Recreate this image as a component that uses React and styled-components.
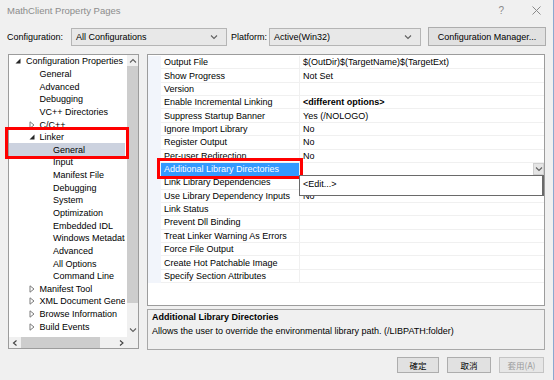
import React from 'react'
import styled, { createGlobalStyle } from 'styled-components'

const GlobalStyle = createGlobalStyle`
  body {
    margin: 0;
    background: #f0f0f0;
    font-family: "Liberation Sans", Arial, "Noto Sans CJK TC", sans-serif;
    font-size: 9px;
    color: #000;
  }
`

const treeItems = [
  { text: 'Configuration Properties', level: 0, toggle: 'open' },
  { text: 'General', level: 1 },
  { text: 'Advanced', level: 1 },
  { text: 'Debugging', level: 1 },
  { text: 'VC++ Directories', level: 1 },
  { text: 'C/C++', level: 1, toggle: 'closed' },
  { text: 'Linker', level: 1, toggle: 'open', marked: true },
  { text: 'General', level: 2, selected: true, marked: true },
  { text: 'Input', level: 2 },
  { text: 'Manifest File', level: 2 },
  { text: 'Debugging', level: 2 },
  { text: 'System', level: 2 },
  { text: 'Optimization', level: 2 },
  { text: 'Embedded IDL', level: 2 },
  { text: 'Windows Metadata', level: 2 },
  { text: 'Advanced', level: 2 },
  { text: 'All Options', level: 2 },
  { text: 'Command Line', level: 2 },
  { text: 'Manifest Tool', level: 1, toggle: 'closed' },
  { text: 'XML Document Generator', level: 1, toggle: 'closed' },
  { text: 'Browse Information', level: 1, toggle: 'closed' },
  { text: 'Build Events', level: 1, toggle: 'closed' },
]

// value of "Link Library Dependencies" sits under the open drop-down, so left blank
const properties = [
  ['Output File', '$(OutDir)$(TargetName)$(TargetExt)'],
  ['Show Progress', 'Not Set'],
  ['Version', ''],
  ['Enable Incremental Linking', '<different options>', true],
  ['Suppress Startup Banner', 'Yes (/NOLOGO)'],
  ['Ignore Import Library', 'No'],
  ['Register Output', 'No'],
  ['Per-user Redirection', 'No'],
  ['Additional Library Directories', '', false, true],
  ['Link Library Dependencies', ''],
  ['Use Library Dependency Inputs', 'No'],
  ['Link Status', ''],
  ['Prevent Dll Binding', ''],
  ['Treat Linker Warning As Errors', ''],
  ['Force File Output', ''],
  ['Create Hot Patchable Image', ''],
  ['Specify Section Attributes', ''],
]

const Chevron = ({ dir = 'down', color = '#606060' }) => {
  const paths = {
    down: 'M1 1.5 L4 4.5 L7 1.5',
    up: 'M1 4.5 L4 1.5 L7 4.5',
    left: 'M4.5 0.5 L1.5 3 L4.5 5.5',
    right: 'M2 0.5 L5 3 L2 5.5',
  }
  const horiz = dir === 'left' || dir === 'right'
  return (
    <svg width={horiz ? 7 : 8} height={6} viewBox={horiz ? '0 0 7 6' : '0 0 8 6'}>
      <path d={paths[dir]} fill="none" stroke={color} strokeWidth="1.1" />
    </svg>
  )
}

const Triangle = ({ open }) =>
  open ? (
    <svg width="6" height="6" viewBox="0 0 6 6">
      <path d="M5.5 0.5 L5.5 5.5 L0.5 5.5 Z" fill="#262626" />
    </svg>
  ) : (
    <svg width="6" height="8" viewBox="0 0 6 8">
      <path d="M1 0.8 L5 4 L1 7.2 Z" fill="none" stroke="#7a7a7a" strokeWidth="1" />
    </svg>
  )

export default function App() {
  const marked = treeItems.filter((i) => i.marked)
  const firstMarked = treeItems.findIndex((i) => i.marked)
  return (
    <>
      <GlobalStyle />
      <Window>
        <TitleBar>
          <Title>MathClient Property Pages</Title>
          <Caption>
            <span>?</span>
            <svg width="9" height="9" viewBox="0 0 9 9">
              <path d="M0.5 0.5 L8.5 8.5 M8.5 0.5 L0.5 8.5" stroke="#8a8a8a" strokeWidth="1" />
            </svg>
          </Caption>
        </TitleBar>

        <ConfigBar>
          <Label>Configuration:</Label>
          <Select>
            All Configurations
            <Chevron />
          </Select>
          <Label $indent>Platform:</Label>
          <Select>
            Active(Win32)
            <Chevron />
          </Select>
          <span />
          <Button $h={19}>Configuration Manager...</Button>
        </ConfigBar>

        <Body>
          <Tree>
            <List>
              {treeItems.slice(0, firstMarked).map((item, i) => (
                <TreeRow key={i} item={item} />
              ))}
              <Marked>
                {marked.map((item, i) => (
                  <TreeRow key={i} item={item} />
                ))}
              </Marked>
              {treeItems.slice(firstMarked + marked.length).map((item, i) => (
                <TreeRow key={i} item={item} />
              ))}
            </List>
            <VScroll>
              <ArrowCell $h={11}>
                <Chevron dir="up" />
              </ArrowCell>
              <VThumb />
              <Spacer />
              <ArrowCell $h={14}>
                <Chevron dir="down" />
              </ArrowCell>
            </VScroll>
            <HScroll>
              <ArrowCell $w={12}>
                <Chevron dir="left" color="#404040" />
              </ArrowCell>
              <HThumb />
              <Spacer />
              <ArrowCell $w={12}>
                <Chevron dir="right" color="#404040" />
              </ArrowCell>
            </HScroll>
            <Corner />
          </Tree>

          <RightColumn>
            <Grid>
              {properties.map(([name, value, bold, selected], i) => (
                <PropRow key={i}>
                  <Gutter />
                  <NameCell $selected={selected}>{name}</NameCell>
                  <ValueCell $bold={bold}>
                    {value}
                    {selected && (
                      <>
                        <DropButton>
                          <Chevron />
                        </DropButton>
                        <Popup>&lt;Edit...&gt;</Popup>
                      </>
                    )}
                  </ValueCell>
                </PropRow>
              ))}
            </Grid>
            <Description>
              <DescTitle>Additional Library Directories</DescTitle>
              <div>Allows the user to override the environmental library path. (/LIBPATH:folder)</div>
            </Description>
          </RightColumn>
        </Body>

        <Footer>
          <Button $w={42} $h={16} $cjk>確定</Button>
          <Button $w={44} $h={16} $cjk>取消</Button>
          <Button $w={45} $h={16} $cjk disabled>套用(A)</Button>
        </Footer>
      </Window>
    </>
  )
}

function TreeRow({ item }) {
  return (
    <Row $level={item.level} $selected={item.selected}>
      <Toggle>{item.toggle && <Triangle open={item.toggle === 'open'} />}</Toggle>
      <RowText>{item.text}</RowText>
    </Row>
  )
}

const Window = styled.div`
  width: 554px;
  height: 380px;
  box-sizing: border-box;
  display: flex;
  flex-direction: column;
  background: #f0f0f0;
  border-right: 1px solid #8aa8d0;
  overflow: hidden;
`

const TitleBar = styled.div`
  height: 21px;
  display: flex;
  align-items: center;
  justify-content: space-between;
  padding: 0 12px 0 7px;
`

const Title = styled.div`
  font-size: 9.5px;
  color: #8c8c8c;
`

const Caption = styled.div`
  display: flex;
  align-items: center;
  gap: 28px;
  color: #8a8a8a;
  font-size: 10px;
`

const ConfigBar = styled.div`
  display: grid;
  grid-template-columns: 64px 156px 42px 152px 7px 118px;
  align-items: center;
  margin-top: 6px;
  padding-left: 7px;
  height: 19px;
`

const Label = styled.span`
  padding-left: ${(p) => (p.$indent ? '4px' : '0')};
  white-space: nowrap;
`

const Select = styled.div`
  height: 18px;
  box-sizing: border-box;
  display: flex;
  align-items: center;
  justify-content: space-between;
  padding: 0 8px 0 4px;
  background: #e8e8e8;
  border: 1px solid #b5b5b5;
`

const Button = styled.div`
  width: ${(p) => (p.$w ? `${p.$w}px` : 'auto')};
  height: ${(p) => p.$h}px;
  box-sizing: border-box;
  display: flex;
  align-items: center;
  justify-content: center;
  background: ${(p) => (p.disabled ? '#e6e6e6' : '#e1e1e1')};
  border: 1px solid ${(p) => (p.disabled ? '#c4c4c4' : '#adadad')};
  color: ${(p) => (p.disabled ? '#9a9a9a' : '#000')};
  font-family: ${(p) =>
    p.$cjk ? '"Noto Sans CJK TC", "Liberation Sans", sans-serif' : 'inherit'};
  font-size: ${(p) => (p.$cjk ? '8.5px' : 'inherit')};
  white-space: nowrap;
`

const Body = styled.div`
  display: flex;
  align-items: flex-start;
  gap: 8px;
  margin-top: 8px;
  padding: 0 8px;
`

const Tree = styled.div`
  width: 131px;
  height: 295px;
  box-sizing: border-box;
  border: 1px solid #9c9c9c;
  background: #fff;
  display: grid;
  grid-template-columns: 118px 11px;
  grid-template-rows: 282px 11px;
`

const List = styled.div`
  display: flex;
  flex-direction: column;
`

const Marked = styled.div`
  position: relative;
  &::after {
    content: '';
    position: absolute;
    top: -4px;
    bottom: -3px;
    left: -4px;
    right: -2px;
    border: 3px solid #ff0000;
    pointer-events: none;
  }
`

const Row = styled.div`
  height: 12.65px;
  display: flex;
  align-items: center;
  padding-left: ${(p) => 4 + 13.5 * p.$level}px;
  margin-right: 2px;
  background: ${(p) => (p.$selected ? '#ccd2df' : 'transparent')};
  white-space: nowrap;
  overflow: hidden;
`

const Toggle = styled.span`
  flex: 0 0 13px;
  display: flex;
  align-items: center;
  padding-left: 2px;
  box-sizing: border-box;
`

const RowText = styled.span`
  line-height: 12px;
`

const VScroll = styled.div`
  display: flex;
  flex-direction: column;
  background: #f0f0f0;
`

const ArrowCell = styled.div`
  flex: 0 0 ${(p) => (p.$h ? `${p.$h}px` : `${p.$w}px`)};
  display: flex;
  align-items: center;
  justify-content: center;
`

const VThumb = styled.div`
  height: 237px;
  background: #cdcdcd;
`

const Spacer = styled.div`
  flex: 1;
`

const HScroll = styled.div`
  display: flex;
  background: #f0f0f0;
`

const HThumb = styled.div`
  width: 79px;
  background: #cdcdcd;
`

const Corner = styled.div`
  background: #f0f0f0;
`

const RightColumn = styled.div`
  width: 398px;
  display: flex;
  flex-direction: column;
  gap: 3px;
`

const Grid = styled.div`
  height: 252px;
  box-sizing: border-box;
  border: 1px solid #9c9c9c;
  background: #fff;
  padding-top: 1px;
`

const PropRow = styled.div`
  display: grid;
  grid-template-columns: 13px 138px 1fr;
  height: 13.36px;
`

const Gutter = styled.div`
  background: #f2f5fb;
`

const NameCell = styled.div`
  position: relative;
  display: flex;
  align-items: center;
  padding-left: 3px;
  box-sizing: border-box;
  white-space: nowrap;
  background: ${(p) => (p.$selected ? '#3399ff' : 'transparent')};
  color: ${(p) => (p.$selected ? '#fff' : '#000')};
  border-bottom: 1px solid ${(p) => (p.$selected ? '#3399ff' : '#f0f0f0')};
  ${(p) =>
    p.$selected &&
    `
    &::after {
      content: '';
      position: absolute;
      top: -5px;
      bottom: -4px;
      left: -4px;
      right: -4px;
      border: 3px solid #ff0000;
      z-index: 2;
    }
  `}
`

const ValueCell = styled.div`
  position: relative;
  display: flex;
  align-items: center;
  padding-left: 3px;
  box-sizing: border-box;
  white-space: nowrap;
  border-left: 1px solid #f0f0f0;
  border-bottom: 1px solid #f0f0f0;
  font-weight: ${(p) => (p.$bold ? 'bold' : 'normal')};
`

const DropButton = styled.div`
  margin-left: auto;
  width: 11px;
  height: 12px;
  box-sizing: border-box;
  display: flex;
  align-items: center;
  justify-content: center;
  background: #e5e5e5;
  border: 1px solid #cfcfcf;
`

const Popup = styled.div`
  position: absolute;
  top: 100%;
  left: -1px;
  right: 0;
  height: 21px;
  box-sizing: border-box;
  background: #fff;
  border: 1px solid #6a6a6a;
  border-right-width: 2px;
  padding: 2px 0 0 3px;
  line-height: 12px;
  font-weight: normal;
  z-index: 3;
`

const Description = styled.div`
  height: 41px;
  box-sizing: border-box;
  border: 1px solid #a8a8a8;
  background: #f0f0f0;
  padding: 1px 4px;
  line-height: 13.5px;
`

const DescTitle = styled.div`
  font-weight: bold;
`

const Footer = styled.div`
  display: flex;
  justify-content: flex-end;
  gap: 8px;
  margin-top: 7px;
  padding-right: 9px;
`
